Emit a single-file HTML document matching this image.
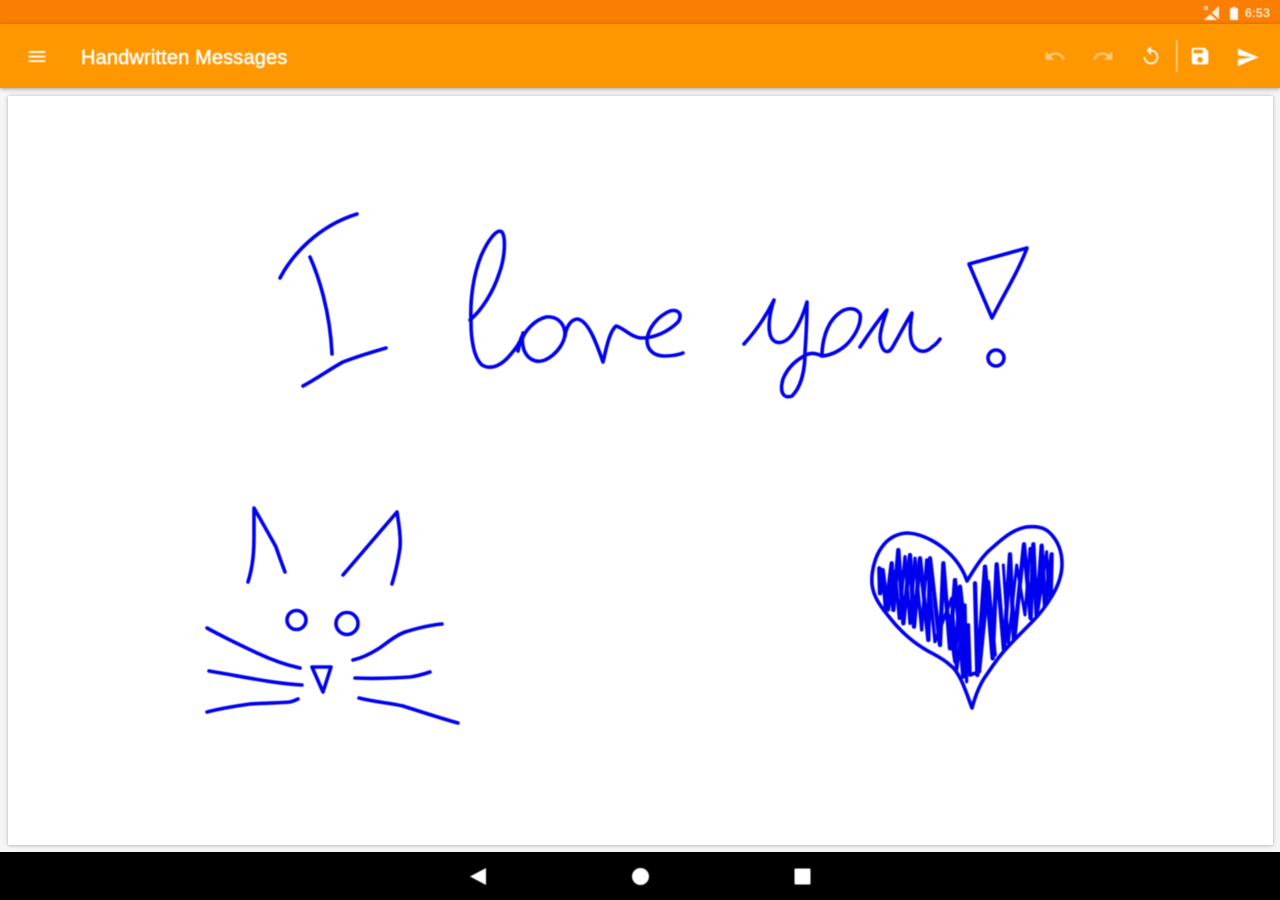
<!DOCTYPE html>
<html>
<head>
<meta charset="utf-8">
<style>
html,body{margin:0;padding:0;width:1280px;height:900px;overflow:hidden;background:#f5f5f7}
body{position:relative;font-family:"Liberation Sans",sans-serif}
.abs{position:absolute}
#status{left:0;top:0;width:1280px;height:24px;background:#f97e02}
#bar{left:0;top:24px;width:1280px;height:64px;background:#ff9800;box-shadow:0 1px 4px rgba(0,0,0,.35)}
#card{left:8px;top:96px;width:1265px;height:749px;background:#fff;box-shadow:0 0 4px rgba(0,0,0,.22),0 1px 2px rgba(0,0,0,.1)}
#nav{left:0;top:852px;width:1280px;height:48px;background:#000}
#title{left:81px;top:46px;color:#fff;font-size:20px;font-weight:normal;line-height:24px;white-space:nowrap;filter:blur(.6px);letter-spacing:.15px;-webkit-text-stroke:.5px #fff}
#time{left:1245px;top:7px;color:#fff;font-size:12px;line-height:13px;filter:blur(.6px);letter-spacing:.5px;-webkit-text-stroke:.2px #fff}
svg{position:absolute;left:0;top:0}
</style>
</head>
<body>
<div class="abs" id="status"></div>
<div class="abs" id="card"></div>
<div class="abs" id="bar"></div>
<div class="abs" id="nav"></div>
<div class="abs" id="title">Handwritten Messages</div>
<div class="abs" id="time">6:53</div>

<svg width="1280" height="900" viewBox="0 0 1280 900" style="filter:blur(.6px)">
  <defs>
    <clipPath id="hc"><path d="M972 708C966 692 960 672 950 665C940 656 932 654 923 648C910 640 898 628 890 618C880 606 873 596 872 584C871 572 875 556 882 547C888 538 898 533 908 533C924 534 940 544 950 554C958 562 964 572 967 581C975 568 982 556 992 548C1002 539 1012 530 1026 527C1036 526 1044 527 1050 533C1058 541 1062 552 1062 564C1062 576 1058 586 1052 596C1046 606 1040 614 1032 622C1022 632 1014 640 1005 650C996 660 990 670 985 677C979 686 975 697 972 708Z"/></clipPath>
  </defs>
  <!-- toolbar icons -->
  <g fill="#fff">
    <g transform="translate(26,45.5) scale(.92)"><path d="M3 18h18v-2H3v2zm0-5h18v-2H3v2zm0-7v2h18V6H3z"/></g>
    <g transform="translate(1044,45) scale(.92)" opacity=".5"><path d="M12.5 8c-2.65 0-5.05.99-6.9 2.6L2 7v9h9l-3.62-3.62c1.39-1.16 3.16-1.88 5.12-1.88 3.54 0 6.55 2.31 7.6 5.5l2.37-.78C21.08 11.03 17.15 8 12.5 8z"/></g>
    <g transform="translate(1092,45) scale(.92)" opacity=".5"><path d="M18.4 10.6C16.55 8.99 14.15 8 11.5 8c-4.65 0-8.58 3.03-9.96 7.22L3.9 16c1.05-3.19 4.05-5.5 7.6-5.5 1.95 0 3.73.72 5.12 1.88L13 16h9V7l-3.6 3.6z"/></g>
    <g transform="translate(1140,45) scale(.92)" opacity=".9"><path d="M12 5V1L7 6l5 5V7c3.31 0 6 2.69 6 6s-2.69 6-6 6-6-2.69-6-6H4c0 4.42 3.58 8 8 8s8-3.58 8-8-3.58-8-8-8z"/></g>
    <rect x="1176" y="40" width="1.5" height="32" opacity=".6"/>
    <g transform="translate(1189,45) scale(.92)"><path d="M17 3H5c-1.11 0-2 .9-2 2v14c0 1.1.89 2 2 2h14c1.1 0 2-.9 2-2V7l-4-4zm-5 16c-1.66 0-3-1.34-3-3s1.34-3 3-3 3 1.34 3 3-1.34 3-3 3zm3-10H5V5h10v4z"/></g>
    <g transform="translate(1236,45.5) scale(.98)"><path d="M2.01 21L23 12 2.01 3 2 10l15 2-15 2z"/></g>
    <!-- status icons -->
    <path d="M1219 6v14h-15z" opacity=".9"/>
    <path d="M1203 5l17 15h-3L1203 8z" fill="#f97e02"/>
    <rect x="1204" y="6" width="4" height="4" opacity=".6"/>
    <path d="M1231 8h1.5V7h3v1h1.5a1 1 0 0 1 1 1v10a1 1 0 0 1-1 1h-6a1 1 0 0 1-1-1V9a1 1 0 0 1 1-1z" opacity=".95"/>
    <!-- nav icons -->
    <path d="M486 868v17l-16-8.500z"/>
    <circle cx="640.500" cy="876.500" r="8.500"/>
    <rect x="794.500" y="868.500" width="16" height="16" rx="1"/>
  </g>

  <!-- handwriting -->
  <g fill="none" stroke="#0000ee" stroke-width="3.600" stroke-linecap="round" stroke-linejoin="round">
    <!-- I -->
    <path d="M280 278C292 255 318 226 357 214"/>
    <path d="M310 257C318 275 330 310 332 354"/>
    <path d="M303 386C318 378 330 369 343 362C358 356 372 352 386 348"/>
    <!-- love -->
    <path d="M470 320C482 310 493 292 499 274C505 258 506 238 502 232C497 228 488 240 481 256C473 276 470 300 471 322C471 340 474 358 482 365C492 371 503 364 511 354C516 348 520 343 522 336C519 342 519 348 518 351"/>
    <path d="M522 340C524 332 534 320 546 317C556 316 564 322 565 333C565 343 556 355 545 360C535 364 527 358 524 350C522 344 522 338 523 333"/>
    <path d="M565 336C566 328 570 320 577 319C588 320 596 342 603 362C606 350 609 332 616 326C624 328 632 338 642 338C654 338 668 332 678 322C683 314 678 309 670 311C658 316 648 328 647 340C647 350 654 356 664 356C672 356 678 355 683 353"/>
    <!-- you -->
    <path d="M744 344C755 332 766 316 774 300C770 312 767 328 771 337C775 345 784 344 791 336C799 326 804 312 807 302C807 320 806 338 805 352C805 368 802 386 792 396C784 399 779 393 783 379C787 369 795 361 804 356C810 352 816 353 822 356C822 342 826 324 838 314C846 307 856 307 860 314C862 324 854 338 845 346C838 352 830 355 823 356"/>
    <path d="M860 347C868 335 878 320 887 310C883 322 878 336 881 344C883 352 888 354 892 348C899 336 906 322 912 313C910 325 909 338 913 345C918 353 926 353 932 347C935 345 938 342 940 339"/>
    <!-- ! -->
    <path d="M969 264L1027 248C1018 272 1003 296 992 318Z"/>
    <circle cx="996" cy="358" r="8"/>
    <!-- cat -->
    <path d="M248 582C253 566 254 552 254 535C254 525 254 515 254 508C262 522 270 536 276 547C279 556 282 564 285 572"/>
    <path d="M343 575C360 555 380 532 397 512C399 525 401 538 400 548C398 562 395 574 392 584"/>
    <circle cx="296.500" cy="620" r="9.500"/>
    <circle cx="347" cy="623.500" r="11"/>
    <path d="M207 628C225 638 240 645 257 653C272 660 286 665 300 668"/>
    <path d="M209 671C240 676 270 683 302 685"/>
    <path d="M207 712C222 708 236 706 250 704C265 703 280 703 290 702C294 701 296 700 298 699"/>
    <path d="M353 660C362 658 370 654 378 649C386 644 394 636 405 632C418 628 430 625 442 624"/>
    <path d="M355 678C375 679 395 678 410 677C418 676 424 674 430 672"/>
    <path d="M359 698C375 702 390 703 403 706C422 712 440 718 458 723"/>
    <path d="M312 667H331L323 692Z"/>
    <!-- heart outline -->
    <path d="M972 708C966 692 960 672 950 665C940 656 932 654 923 648C910 640 898 628 890 618C880 606 873 596 872 584C871 572 875 556 882 547C888 538 898 533 908 533C924 534 940 544 950 554C958 562 964 572 967 581C975 568 982 556 992 548C1002 539 1012 530 1026 527C1036 526 1044 527 1050 533C1058 541 1062 552 1062 564C1062 576 1058 586 1052 596C1046 606 1040 614 1032 622C1022 632 1014 640 1005 650C996 660 990 670 985 677C979 686 975 697 972 708Z"/>
  </g>
  <!-- heart scribble -->
  <g clip-path="url(#hc)">
  <g transform="translate(860,515) scale(.3333)" fill="none" stroke="#0000ee" stroke-width="13" stroke-linejoin="round" stroke-linecap="round">
    <polyline points="58,160 60,235 68,165 78,285 95,145 100,285 115,105 130,325 150,120 162,335 180,130 205,375 210,130 240,390 250,145 270,400 285,195 310,485 300,215 328,470"/>
    <polyline points="345,205 352,480 375,155 398,430 410,148 432,405 450,118 462,380 492,88 512,310 520,88 530,305 545,92 555,275 575,118 572,250"/>
    <polyline stroke-width="10" points="70,170 85,285 105,170 118,310 135,125 150,325 165,130 185,345 200,135 225,380 275,250 290,465 315,270 320,500"/>
    <polyline stroke-width="11" points="265,300 285,440 295,290 315,470 325,330 330,480 358,470 385,200 405,420"/>
    <polyline stroke-width="9" points="430,150 445,385 470,150 495,300 510,100 535,280 560,110 565,240"/>
  </g>
  </g>
</svg>
</body>
</html>
